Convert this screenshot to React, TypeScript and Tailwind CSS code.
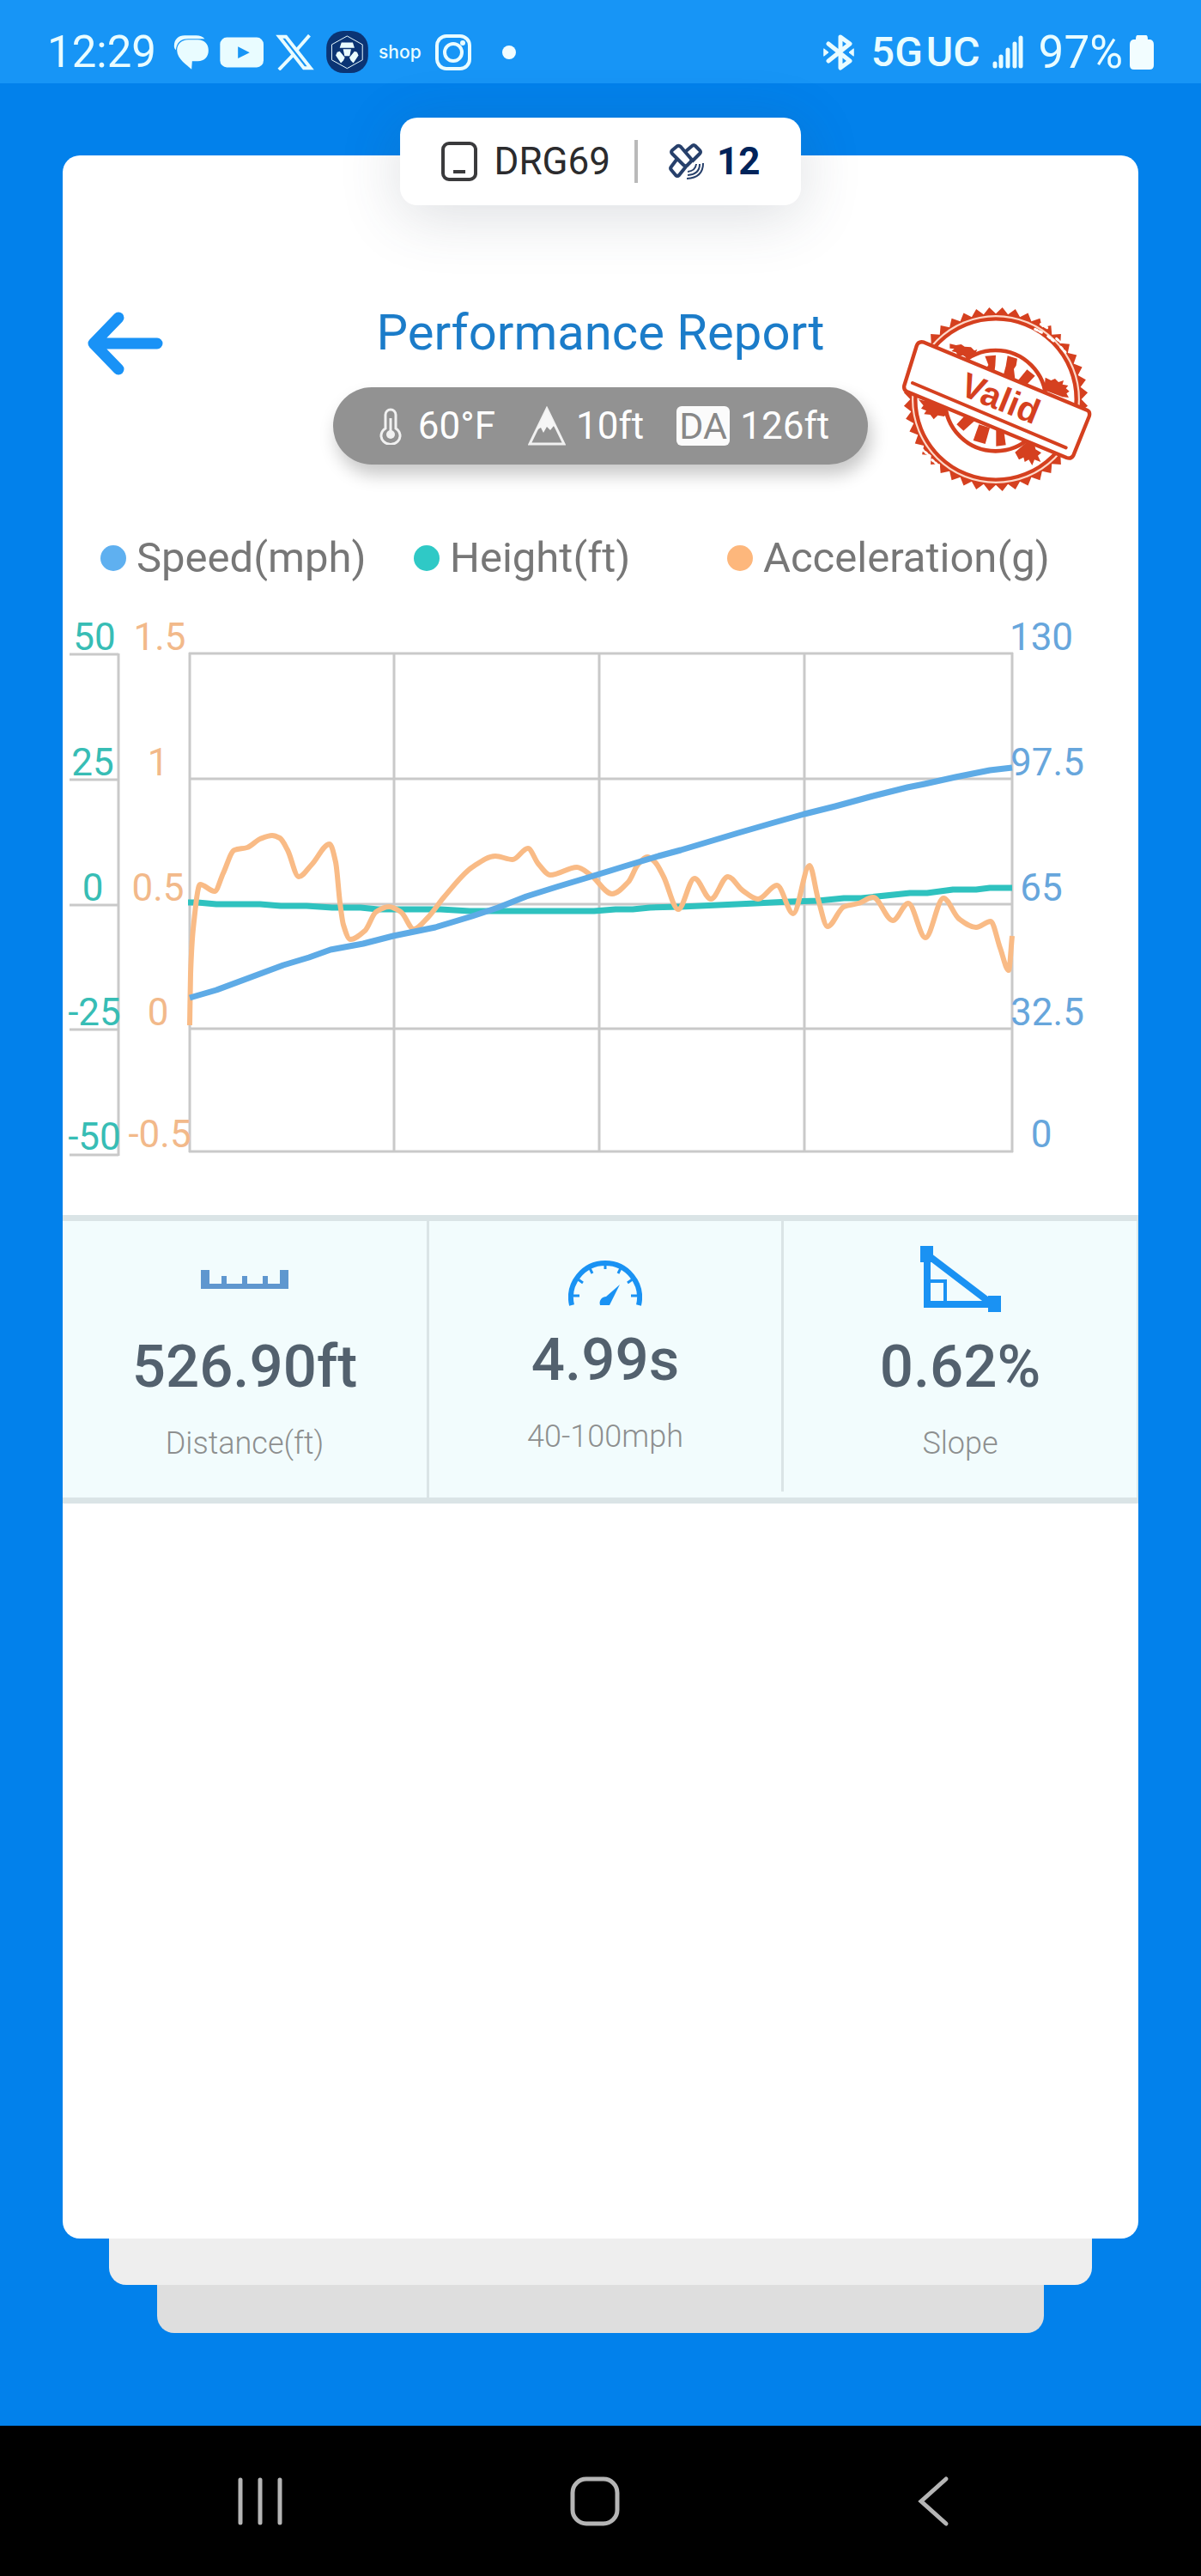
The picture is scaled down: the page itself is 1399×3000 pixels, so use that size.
import React from "react";

type Point = [number, number];

/* Monotone cubic path: smooth between samples without overshooting them. */
function smoothPath(points: Point[]): string {
  const n = points.length;
  const slopes: number[] = [];
  for (let i = 0; i < n - 1; i++) {
    slopes.push((points[i + 1][1] - points[i][1]) / (points[i + 1][0] - points[i][0]));
  }
  const tangents = points.map((_, i) => {
    if (i === 0) return slopes[0];
    if (i === n - 1) return slopes[n - 2];
    const a = slopes[i - 1];
    const b = slopes[i];
    return a * b <= 0 ? 0 : (2 * a * b) / (a + b);
  });
  let d = `M${points[0][0]} ${points[0][1]}`;
  for (let i = 0; i < n - 1; i++) {
    const [x0, y0] = points[i];
    const [x1, y1] = points[i + 1];
    const h = (x1 - x0) / 3;
    d += `C${x0 + h} ${y0 + h * tangents[i]} ${x1 - h} ${y1 - h * tangents[i + 1]} ${x1} ${y1}`;
  }
  return d;
}

const linePath = (points: Point[]) => "M" + points.map((p) => p.join(" ")).join("L");

const acceleration: Point[] = [
  [148, 494], [149, 434], [152, 382], [160, 330], [177, 338], [187, 317], [200, 290], [215, 287],
  [230, 277], [244, 273], [253, 276], [262, 290], [275, 321], [290, 307], [311, 283], [318, 304],
  [323, 351], [327, 377], [335, 394], [352, 384], [365, 362], [380, 356], [394, 362], [409, 382],
  [425, 369], [444, 345], [477, 310], [504, 297], [524, 301], [542, 288], [554, 306], [568, 319],
  [599, 310], [615, 319], [640, 341], [659, 327], [670, 307], [681, 298], [690, 304], [700, 321],
  [717, 359], [736, 323], [755, 347], [775, 321], [792, 337], [810, 347], [832, 331], [851, 364],
  [870, 308], [880, 347], [891, 379], [910, 356], [927, 352], [944, 345], [967, 372], [985, 352],
  [1005, 392], [1026, 346], [1044, 370], [1064, 380], [1081, 373], [1092, 404], [1102, 430], [1106, 390],
];

const height: Point[] = [
  [146, 351], [157, 351], [179, 353], [230, 353], [254, 355], [284, 355], [314, 357], [347, 357],
  [367, 359], [440, 359], [474, 361], [619, 361], [644, 359], [664, 359], [684, 357], [720, 356],
  [764, 354], [807, 352], [847, 350], [880, 349], [910, 346], [930, 346], [987, 340], [1007, 340],
  [1037, 336], [1064, 336], [1080, 334], [1106, 334],
];

const speed: Point[] = [
  [148, 462], [179, 453], [257, 424], [287, 415], [312, 406], [350, 399], [385, 390], [434, 380],
  [477, 367], [507, 357], [540, 344], [575, 333], [615, 321], [654, 309], [694, 297], [720, 290],
  [787, 270], [825, 259], [864, 248], [900, 239], [944, 227], [984, 217], [1004, 213], [1040, 205],
  [1080, 197], [1106, 194],
];

const gridY = [61, 207, 353, 498, 641];
const gridX = [148, 386, 625, 864, 1106];
const tickY = [62, 208, 354, 499, 645];

const heightLabels = [
  { text: "50", x: 37, y: 57 },
  { text: "25", x: 35, y: 203 },
  { text: "0", x: 35, y: 349 },
  { text: "-25", x: 37, y: 494 },
  { text: "-50", x: 37, y: 639 },
];
const accelerationLabels = [
  { text: "1.5", x: 113, y: 57 },
  { text: "1", x: 111, y: 203 },
  { text: "0.5", x: 111, y: 349 },
  { text: "0", x: 111, y: 494 },
  { text: "-0.5", x: 113, y: 636 },
];
const speedLabels = [
  { text: "130", x: 1140, y: 57 },
  { text: "97.5", x: 1147, y: 203 },
  { text: "65", x: 1140, y: 349 },
  { text: "32.5", x: 1147, y: 494 },
  { text: "0", x: 1140, y: 636 },
];

function Chart() {
  return (
    <svg viewBox="0 0 1253 680" className="block h-auto w-full" role="img" aria-label="Speed, height and acceleration over the run">
      <g stroke="#c9c9c9" strokeWidth="3" fill="none">
        {gridY.map((y) => (
          <path key={y} d={`M147 ${y}H1107`} />
        ))}
        {gridX.map((x) => (
          <path key={x} d={`M${x} 60V642`} />
        ))}
        {tickY.map((y) => (
          <path key={y} d={`M8 ${y}H65`} />
        ))}
        <path d="M65 61V646" />
      </g>
      <g fontSize="44" textAnchor="middle" className="font-[Roboto,sans-serif]">
        <g fill="#37bdb5">
          {heightLabels.map((l) => (
            <text key={l.text} x={l.x} y={l.y}>{l.text}</text>
          ))}
        </g>
        <g fill="#f2b98a">
          {accelerationLabels.map((l) => (
            <text key={l.text} x={l.x} y={l.y}>{l.text}</text>
          ))}
        </g>
        <g fill="#67a6dc">
          {speedLabels.map((l) => (
            <text key={l.text} x={l.x} y={l.y}>{l.text}</text>
          ))}
        </g>
      </g>
      <g fill="none" strokeLinejoin="round">
        <path d={linePath(height)} stroke="#2fc2bf" strokeWidth="7" />
        <path d={smoothPath(acceleration)} stroke="#f9bb86" strokeWidth="6" />
        <path d={linePath(speed)} stroke="#5eabe6" strokeWidth="7" />
      </g>
    </svg>
  );
}

function teeth(): string {
  const count = 44;
  const parts: string[] = [];
  for (let i = 0; i < count; i++) {
    const a = (i / count) * Math.PI * 2;
    const b = ((i + 0.5) / count) * Math.PI * 2;
    parts.push(`${363 + 299 * Math.cos(a)},${360 + 299 * Math.sin(a)}`);
    parts.push(`${363 + 322 * Math.cos(b)},${360 + 322 * Math.sin(b)}`);
  }
  return parts.join(" ");
}

function ValidStamp() {
  const red = "#d5401f";
  return (
    <svg viewBox="0 0 735 705" className="ml-7 h-[235px] w-[245px]" role="img" aria-label="Valid">
      <polygon points={teeth()} fill={red} />
      <circle cx="363" cy="360" r="294" fill="#ffd9c9" />
      <circle cx="363" cy="360" r="281" fill="#fff" stroke={red} strokeWidth="13" />
      <g stroke="#fff" fill="none" strokeLinecap="round">
        <path d="M500 115l28 14M545 140l20 16M590 178l16 18M520 98l22 12M575 148l14 12" strokeWidth="9" strokeDasharray="9 8" />
        <path d="M105 535l26 22M140 572l24 20" strokeWidth="9" strokeDasharray="7 8" />
      </g>
      <g fill={red}>
        <path d="M202 166l22 5 18-3 12 8 22 2 12 12 10-4-8 18-22 16-20-14-16 4-8-14-16-4 10-8-16-2z" />
        <path d="M536 284l20 10 14-6 12 12 18-6-4 14 20 4-8 10 12 10-10 8 8 14-22-2-20-8-44-16z" />
        <path d="M92 360l24 6 20-4 30 16 40 8-6 18-18 16-22-4-14 14-12-16-22-2 8-12-18-8 8-10z" />
        <path d="M430 545l40-34 28 6 4 18 20 12-12 10 10 22-22-8-8 20-12-20-14 8-4-16-16 8z" />
      </g>
      <circle cx="362" cy="365" r="176" fill="#fff" stroke={red} strokeWidth="14" />
      <g fill={red}>
        <path d="M325 209l38-3-2 36-4 30-34-10 14-22z" />
        <path d="M404 208l34 10-4 24-8 12 4 34-40-14 8-30z" />
        <path d="M472 256l28 22-34 36-30-14z" />
        <path d="M252 420l38 14-40 36-24-22z" />
        <path d="M304 448l38 12-16 56-42-12z" />
        <path d="M364 462h26l8 58-34 4z" />
      </g>
      <path d="M112 161L682 398Q694 404 689 420L634 556Q626 570 610 564L52 333Q40 328 43 312L86 174Q92 156 112 161Z" fill="#fff" stroke={red} strokeWidth="13" strokeLinejoin="round" />
      <path d="M72 303L608 529" stroke={red} strokeWidth="12" strokeLinecap="round" />
      <text x="380" y="398" fontSize="122" fontWeight="700" fill={red} textAnchor="middle" transform="rotate(22 378 355)" className="font-['Liberation_Sans',sans-serif]">Valid</text>
    </svg>
  );
}

function StatusBar() {
  return (
    <header className="flex h-[97px] items-center justify-between bg-[#1795f6] pt-6 pr-[55px] pl-[55px] text-[#e9fcff]">
      <div className="flex items-center">
        <span className="text-[51px] leading-[60px]">12:29</span>
        <svg viewBox="25 40 125 120" className="ml-5 h-10 w-[42px]" fill="currentColor" aria-label="Messages">
          <path d="M27 78C27 54 42 41 64 41h40c13 0 23 4 30 12H76C50 53 36 66 33 92C29 88 27 83 27 78Z" />
          <path d="M76 56h34c23 0 37 15 37 37s-14 37-37 38H90L88 159C74 145 38 124 37 93 37 71 53 56 76 56Z" />
        </svg>
        <svg viewBox="191 41 154 107" className="ml-3 h-9 w-[51px]" fill="currentColor" aria-label="YouTube">
          <rect x="192" y="42" width="153" height="105" rx="24" />
          <path d="M255 74L296 95 255 116Z" fill="#1795f6" />
        </svg>
        <svg viewBox="386 31 138 128" className="ml-3.5 h-[42px] w-[45px]" fill="none" stroke="currentColor" strokeWidth="12" aria-label="X">
          <path d="M399 39H423L511 151H487ZM507 34L462 86M449 104L398 157" />
        </svg>
        <svg viewBox="565 20 147 148" className="ml-3.5 size-[49px]" aria-label="Crypto.com">
          <rect x="565" y="20" width="147" height="148" rx="60" fill="#0b3474" />
          <path d="M638 38L692 68V122L638 152 584 122V68Z" fill="none" stroke="currentColor" strokeWidth="3" />
          <path d="M618 61H658L664 80H612ZM624 84H652L647 108H629ZM603 95L612 92 630 114 625 124 616 133 598 106ZM673 95L664 92 646 114 651 124 660 133 678 106Z" fill="currentColor" />
        </svg>
        <span className="ml-3 font-[Inter,sans-serif] text-[21px] leading-6 font-medium">shop</span>
        <svg viewBox="0 0 42 42" className="ml-4 size-[42px]" fill="none" stroke="currentColor" strokeWidth="4" aria-label="Instagram">
          <rect x="2" y="2" width="38" height="38" rx="11" />
          <circle cx="21" cy="21" r="10" />
          <circle cx="32" cy="10" r="3" fill="currentColor" stroke="none" />
        </svg>
        <span className="ml-9 size-4 rounded-full bg-[#f2fdff]" />
      </div>
      <div className="flex items-center">
        <svg viewBox="0 0 36 42" className="h-[42px] w-9" fill="none" stroke="currentColor" strokeWidth="5" strokeLinejoin="round" strokeLinecap="round" aria-label="Bluetooth">
          <path d="M6 11L31 31 20 39V3L31 11 6 31" />
          <path d="M1 17L6 21 1 25ZM35 17L30 21 35 25Z" fill="currentColor" strokeWidth="1" />
        </svg>
        <span className="ml-5 text-[48px] leading-[60px] font-medium">5G</span>
        <span className="ml-1 text-[48px] leading-[60px] font-medium">UC</span>
        <svg viewBox="0 0 36 39" className="ml-3.5 h-[39px] w-9" stroke="currentColor" strokeWidth="5" strokeLinecap="round" aria-label="Signal strength">
          <path d="M3 33V36M10 25V36M18 17V36M26 10V36M33 3V36" />
        </svg>
        <span className="ml-4.5 text-[53px] leading-[60px]">97%</span>
        <svg viewBox="0 0 28 40" className="ml-2 h-10 w-7" fill="#f2fdff" aria-label="Battery">
          <path d="M9 0H19Q21 0 21 5H24Q28 6 28 11V35Q28 40 23 40H5Q0 40 0 35V11Q0 6 4 5H7Q7 0 9 0Z" />
        </svg>
      </div>
    </header>
  );
}

function DevicePill() {
  return (
    <div className="absolute top-[-44px] left-1/2 flex h-[102px] -translate-x-1/2 items-center rounded-[20px] bg-white px-[48px] whitespace-nowrap shadow-[0_12px_70px_rgba(60,70,90,0.18)]">
      <svg viewBox="0 0 42 46" className="h-[46px] w-[42px]" fill="none" stroke="#3a3a3c" strokeWidth="4" aria-hidden="true">
        <rect x="2" y="2" width="38" height="42" rx="7" />
        <path d="M14 35H28" />
      </svg>
      <span className="ml-5 text-[44px] leading-[52px] text-[#2b2b2d]">DRG69</span>
      <span className="ml-7 h-[50px] w-1 bg-[#b9b9b9]" />
      <svg viewBox="0 0 42 42" className="ml-9 size-[42px]" fill="none" stroke="#27406b" strokeWidth="4" strokeLinejoin="round" aria-label="Satellites">
        <path d="M4 8L10 3Q12 2 14 4L26 18Q27 20 25 22L21 26Q19 27 17 25L4 12Q2 10 4 8Z" />
        <path d="M20 9L27 3Q29 1 31 3L36 8Q38 10 36 12L27 21M9 19L3 27Q1 29 3 31L8 37Q10 39 12 37L20 27" />
        <path d="M32 24Q31 32 22 33M36 24Q36 36 22 37M40 23Q40 40 21 41" strokeWidth="2" />
      </svg>
      <span className="ml-3.5 text-[44px] leading-[52px] font-bold text-[#00235a]">12</span>
    </div>
  );
}

function ReportHeader() {
  return (
    <div className="grid grid-cols-[1fr_auto_1fr]">
      <button type="button" aria-label="Back" className="mt-[17px] ml-[26px] h-[76px] w-[92px] justify-self-start">
        <svg viewBox="0 0 92 76" className="size-full" fill="none" stroke="#1992f6" strokeWidth="13" strokeLinecap="round" strokeLinejoin="round">
          <path d="M39 8L10 38 39 68M10 38H84" />
        </svg>
      </button>
      <div className="flex flex-col items-center">
        <h1 className="mt-2 text-[58px] leading-[68px] text-[#1b7cc9]">Performance Report</h1>
        <div className="mt-[30px] flex h-[90px] items-center rounded-full bg-[#929292] pr-[45px] pl-[53px] text-[44px] leading-[52px] whitespace-nowrap text-white shadow-[4px_12px_20px_rgba(0,0,0,0.22)]">
          <svg viewBox="0 0 28 44" className="h-11 w-7" fill="none" stroke="#f1f1f1" strokeWidth="3" aria-label="Temperature">
            <path d="M8 25V9a6 6 0 0 1 12 0V25a11 10 0 1 1-12 0Z" />
            <circle cx="14" cy="32" r="5" fill="#f1f1f1" stroke="none" />
            <path d="M14 13V32" />
          </svg>
          <span className="ml-[18px]">60°F</span>
          <svg viewBox="0 0 44 46" className="ml-[38px] h-[46px] w-11" aria-label="Altitude">
            <path d="M22 3L42 44H2Z" fill="none" stroke="#f1f1f1" strokeWidth="3" />
            <path d="M22 3L34 28 30 23 26 28 22 24 18 31 15 25 10 28Z" fill="#f6f6f6" />
          </svg>
          <span className="ml-3">10ft</span>
          <span className="ml-[38px] flex h-[46px] w-[62px] items-center justify-center rounded-md bg-[#fbfbfb] text-[43px] leading-[46px] text-[#888]">DA</span>
          <span className="ml-3">126ft</span>
        </div>
      </div>
      <ValidStamp />
    </div>
  );
}

function Legend() {
  return (
    <ul className="mt-10 grid grid-cols-[365fr_365fr_479fr] pl-11 text-[49px] leading-[60px] text-[#777]">
      <li className="flex items-center gap-3">
        <span className="size-[30px] rounded-full bg-[#5fb0f0]" />
        Speed(mph)
      </li>
      <li className="flex items-center gap-3">
        <span className="size-[30px] rounded-full bg-[#2fc9c6]" />
        Height(ft)
      </li>
      <li className="flex items-center gap-3">
        <span className="size-[30px] rounded-full bg-[#fdb77c]" />
        Acceleration(g)
      </li>
    </ul>
  );
}

function Stats() {
  return (
    <section className="mt-[35px] grid grid-cols-[427fr_413fr_413fr] border-y-[7px] border-[#dae4e6] bg-[#f2fcfd] text-center">
      <div className="flex flex-col items-center border-r-[3px] border-[#dae4e6] pt-[29px] pb-[42px]">
        <div className="flex h-[77px] items-center">
          <svg viewBox="0 0 102 22" className="h-[22px] w-[102px]" fill="#5f97cf" aria-hidden="true">
            <path d="M0 0H10V16H24V7H30V16H48V7H54V16H72V7H78V16H92V0H102V22H0Z" />
          </svg>
        </div>
        <p className="mt-6 text-[69px] leading-[80px] font-medium text-[#53616e]">526.90ft</p>
        <p className="mt-7 text-[36px] leading-[42px] font-light text-[#8d8f8f]">Distance(ft)</p>
      </div>
      <div className="mb-[7px] flex flex-col items-center border-r-[3px] border-[#dae4e6] pt-[29px]">
        <div className="flex h-[77px] items-end pb-[7px]">
          <svg viewBox="0 0 86 57" className="h-[57px] w-[86px]" fill="none" stroke="#1a92f3" aria-hidden="true">
            <path d="M4 56A40 40 0 1 1 82 56" strokeWidth="6" />
            <path d="M6 45H13M10 25L17 30M24 11L28 19M43 5V14M62 11L58 19M76 25L69 30M80 45H73" strokeWidth="3" />
            <path d="M60 32L48 56H37C35 50 40 46 44 46Z" fill="#1a92f3" stroke="none" />
          </svg>
        </div>
        <p className="mt-4 text-[69px] leading-[80px] font-medium text-[#53616e]">4.99s</p>
        <p className="mt-7 text-[36px] leading-[42px] font-light text-[#8d8f8f]">40-100mph</p>
      </div>
      <div className="flex flex-col items-center border-r-2 border-[#dae9ec] pt-[29px] pb-[42px]">
        <div className="flex h-[77px] items-center">
          <svg viewBox="0 0 94 77" className="h-[77px] w-[94px]" fill="none" stroke="#1a92f3" aria-hidden="true">
            <path d="M8 10V68H84Z" strokeWidth="8" />
            <path d="M8 41H29V68" strokeWidth="4" />
            <path d="M0 0H15V19H0ZM79 58H94V77H79Z" fill="#1a92f3" stroke="none" />
          </svg>
        </div>
        <p className="mt-6 text-[69px] leading-[80px] font-medium text-[#53616e]">0.62%</p>
        <p className="mt-7 text-[36px] leading-[42px] font-light text-[#8d8f8f]">Slope</p>
      </div>
    </section>
  );
}

function NavBar() {
  return (
    <nav className="mt-[108px] grid h-[175px] grid-cols-[606fr_174fr_619fr] items-center justify-items-center bg-black">
      <button type="button" aria-label="Recent apps">
        <svg viewBox="0 0 66 60" className="h-[60px] w-[66px]" stroke="#b5b5b5" strokeWidth="5" strokeLinecap="round">
          <path d="M10 5V55M33 5V55M56 5V55" />
        </svg>
      </button>
      <button type="button" aria-label="Home">
        <svg viewBox="0 0 60 60" className="size-[60px]" fill="none" stroke="#b5b5b5" strokeWidth="5">
          <rect x="4" y="4" width="52" height="52" rx="16" />
        </svg>
      </button>
      <button type="button" aria-label="Back">
        <svg viewBox="0 0 48 60" className="h-[60px] w-12" fill="none" stroke="#b5b5b5" strokeWidth="5" strokeLinecap="round">
          <path d="M36 4L7 30 36 56" />
        </svg>
      </button>
    </nav>
  );
}

export default function App() {
  return (
    <div className="flex min-h-screen flex-col bg-[#0281eb] font-[Roboto,sans-serif]">
      <StatusBar />
      <main className="mt-[84px] flex flex-1 flex-col">
        <article className="relative mx-[73px] flex-1 rounded-[20px] bg-white pt-[164px]">
          <DevicePill />
          <ReportHeader />
          <Legend />
          <div className="mt-5">
            <Chart />
          </div>
          <Stats />
        </article>
        <div className="mx-[127px] h-[54px] rounded-b-[20px] bg-[#eee]" />
        <div className="mx-[183px] h-14 rounded-b-[20px] bg-[#dedede]" />
      </main>
      <NavBar />
    </div>
  );
}
